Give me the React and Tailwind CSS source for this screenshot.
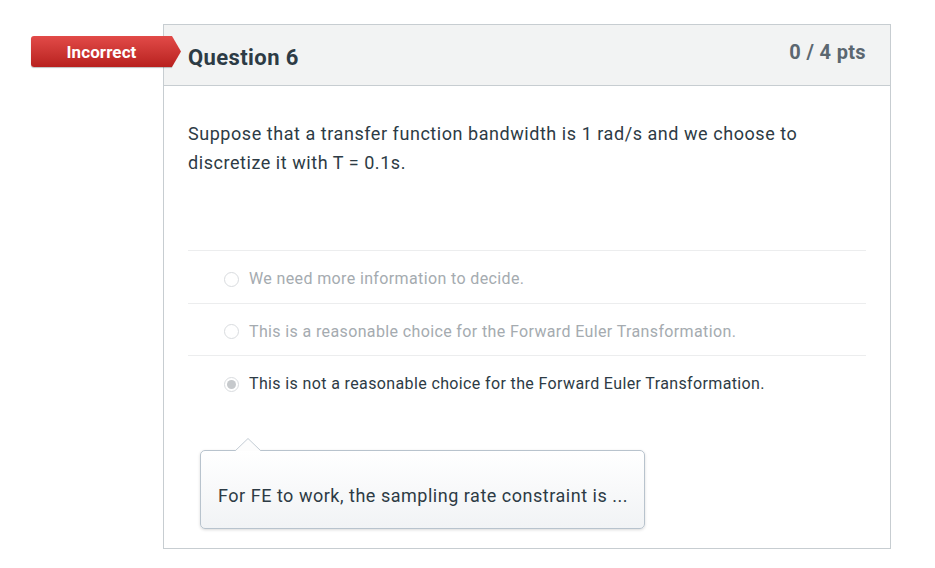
import React from 'react'

const answers = [
  { text: 'We need more information to decide.', selected: false },
  { text: 'This is a reasonable choice for the Forward Euler Transformation.', selected: false },
  { text: 'This is not a reasonable choice for the Forward Euler Transformation.', selected: true },
]

function Radio({ checked }) {
  return (
    <span className="flex h-[15px] w-[15px] shrink-0 items-center justify-center rounded-full border border-[#d9dcdf] bg-white">
      {checked && <span className="h-[9px] w-[9px] rounded-full bg-[#c6c9cc]" />}
    </span>
  )
}

export default function App() {
  return (
    <div className="min-h-[568px] bg-white pt-[24px] font-['Roboto',sans-serif]">
      <div className="relative ml-[163px] w-[728px] border border-[#c7cdd1]">
        {/* result badge */}
        <div className="absolute left-[-133px] top-[11px] flex h-[31px] items-center">
          <div className="flex h-[31px] w-[141px] items-center justify-center rounded-l-[3px] bg-gradient-to-b from-[#e24a48] to-[#b8201e] pt-[2px] text-[17px] font-bold tracking-[0.1px] text-white shadow-[0_1px_1px_rgba(0,0,0,0.25)]">
            Incorrect
          </div>
          <svg width="10" height="31" viewBox="0 0 10 31" className="-ml-px">
            <defs>
              <linearGradient id="bg" x1="0" y1="0" x2="0" y2="1">
                <stop offset="0" stopColor="#e24a48" />
                <stop offset="1" stopColor="#b8201e" />
              </linearGradient>
            </defs>
            <path d="M0 0 L1 0 L10 15.5 L1 31 L0 31 Z" fill="url(#bg)" />
          </svg>
        </div>

        <div className="flex h-[61px] items-start justify-between border-b border-[#c7cdd1] bg-[#f2f3f3] px-[24px]">
          <h2 className="pt-[18px] text-[22px] font-bold leading-[30px] tracking-[0.4px] text-[#2d3b45]">Question 6</h2>
          <div className="pt-[13px] text-[20px] font-bold leading-[28px] tracking-[0.35px] text-[#5b6770]">0 / 4 pts</div>
        </div>

        <div className="px-[24px] pt-[33px] pb-[19px]">
          <p className="text-[18px] leading-[29px] tracking-[0.55px] text-[#2d3b45]">
            Suppose that a transfer function bandwidth is 1 rad/s and we choose to<br />
            discretize it with T = 0.1s.
          </p>

          <div className="mt-[73px]">
            {answers.map((a, i) => (
              <div key={i} className="flex h-[52.5px] items-center gap-[10px] border-t border-[#ecedee] pl-[36px] pt-[5px]">
                <Radio checked={a.selected} />
                <span className={'text-[16px] tracking-[0.37px] ' + (a.selected ? 'text-[#2d3b45]' : 'text-[#a5abb0]')}>{a.text}</span>
              </div>
            ))}
          </div>

          <div className="relative ml-[12px] mt-[42px] w-[445px]">
            <svg width="26" height="14" viewBox="0 0 26 14" className="absolute left-[35px] top-[-12px]">
              <path d="M0 13 L13 0.5 L26 13" fill="#fdfdfd" stroke="#c3ccd4" strokeWidth="1" />
            </svg>
            <div className="h-[79px] whitespace-nowrap rounded-[5px] border border-[#b8c3cd] bg-gradient-to-b from-white to-[#f1f3f5] px-[17px] pt-[31px] text-[18px] leading-[28px] tracking-[0.52px] text-[#2d3b45] shadow-[0_1px_3px_rgba(0,0,0,0.15)]">
              For FE to work, the sampling rate constraint is ...
            </div>
          </div>
        </div>
      </div>
    </div>
  )
}
